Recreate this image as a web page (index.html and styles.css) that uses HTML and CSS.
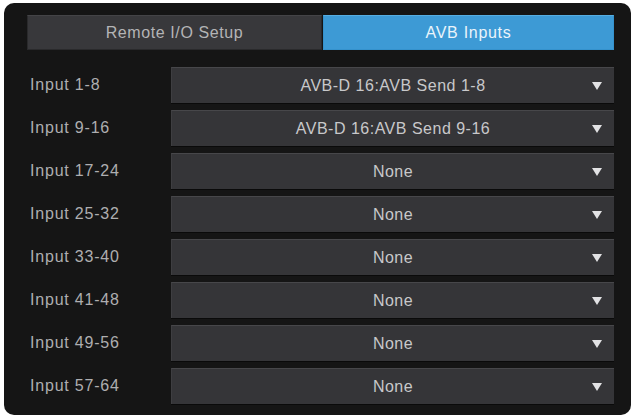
FILE: index.html
```html
<!DOCTYPE html>
<html lang="en">

<head>
    <meta charset="UTF-8">
    <meta name="viewport" content="width=device-width, initial-scale=1.0">
    <title>AVB Inputs</title>
    <link rel="stylesheet" href="styles.css">
</head>

<body>
    <div class="panel">
        <div class="tabs">
            <div class="tab">Remote I/O Setup</div>
            <div class="tab active">AVB Inputs</div>
        </div>

        <div class="rows">
            <div class="row">
                <span class="label">Input 1-8</span>
                <div class="select">AVB-D 16:AVB Send 1-8<span class="arrow"></span></div>
            </div>
            <div class="row">
                <span class="label">Input 9-16</span>
                <div class="select">AVB-D 16:AVB Send 9-16<span class="arrow"></span></div>
            </div>
            <div class="row">
                <span class="label">Input 17-24</span>
                <div class="select">None<span class="arrow"></span></div>
            </div>
            <div class="row">
                <span class="label">Input 25-32</span>
                <div class="select">None<span class="arrow"></span></div>
            </div>
            <div class="row">
                <span class="label">Input 33-40</span>
                <div class="select">None<span class="arrow"></span></div>
            </div>
            <div class="row">
                <span class="label">Input 41-48</span>
                <div class="select">None<span class="arrow"></span></div>
            </div>
            <div class="row">
                <span class="label">Input 49-56</span>
                <div class="select">None<span class="arrow"></span></div>
            </div>
            <div class="row">
                <span class="label">Input 57-64</span>
                <div class="select">None<span class="arrow"></span></div>
            </div>
        </div>
    </div>
</body>

</html>
```

FILE: styles.css
```css
* {
    margin: 0;
    padding: 0;
    box-sizing: border-box;
}

body {
    background-color: #fff;
    font-family: "Liberation Sans", Arial, sans-serif;
    font-size: 16px;
}

.panel {
    margin: 3px 0 0 4px;
    width: 627px;
    height: 412px;
    background-color: #151515;
    border-radius: 10px;
    padding: 12px 17px 0 23px;
}

.tabs {
    display: grid;
    grid-template-columns: 295px 1fr;
    gap: 1px;
    height: 35px;
}

.tab {
    display: flex;
    justify-content: center;
    align-items: center;
    background-color: #38383b;
    color: #b4b4b6;
    letter-spacing: 0.6px;
    border: 1px solid #2a2a2c;
    border-top-color: #444447;
}

.tab.active {
    background-color: #3d9ad5;
    color: #eaf4fb;
    letter-spacing: 0.7px;
    border-color: #3592cd;
    border-top-color: #56aee2;
}

.rows {
    margin-top: 17px;
    display: flex;
    flex-direction: column;
    gap: 7px;
}

.row {
    display: flex;
    align-items: center;
    height: 36px;
}

.label {
    width: 144px;
    padding-left: 3px;
    color: #aeaeb0;
    letter-spacing: 0.8px;
}

.select {
    position: relative;
    flex: 1;
    height: 100%;
    display: flex;
    justify-content: center;
    align-items: center;
    background-color: #353538;
    color: #c8c8ca;
    letter-spacing: 0.5px;
    border-top: 1px solid #47474a;
    border-left: 1px solid #3e3e41;
    box-shadow: 0 1px 0 #0a0a0a;
}

.arrow {
    position: absolute;
    right: 12px;
    top: 14px;
    width: 0;
    height: 0;
    border-left: 5px solid transparent;
    border-right: 5px solid transparent;
    border-top: 8px solid #e2e2e4;
}
```
